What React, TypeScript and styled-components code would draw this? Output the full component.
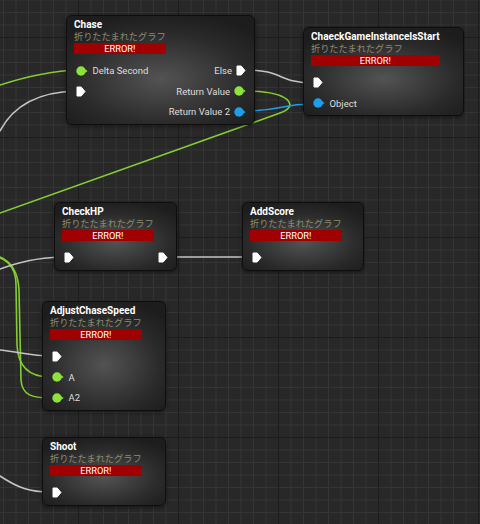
import React from "react";
import styled, { createGlobalStyle } from "styled-components";

const GREEN = "#8fe13c";
const GREEN_WIRE = "#84cc33";
const BLUE = "#1b9fea";
const WHITE_WIRE = "#c4c4c4";

const GlobalStyle = createGlobalStyle`
  html, body { margin: 0; padding: 0; background: #282828; overflow: hidden; }
  #root { width: 480px; height: 524px; }
`;

const Canvas = styled.div`
  position: relative;
  width: 480px;
  height: 524px;
  overflow: hidden;
  background-color: #282828;
  background-image:
    linear-gradient(to right, #1d1d1d 1px, transparent 1px),
    linear-gradient(to bottom, #1d1d1d 1px, transparent 1px),
    linear-gradient(to right, #353535 1px, transparent 1px),
    linear-gradient(to bottom, #353535 1px, transparent 1px);
  background-size: 100px 100px, 100px 100px, 12.5px 12.5px, 12.5px 12.5px;
  background-position: 78px 37px;
  font-family: Roboto, "Noto Sans", sans-serif;
`;

const WireLayer = styled.svg`
  position: absolute;
  left: 0;
  top: 0;
  width: 480px;
  height: 524px;
  pointer-events: none;
`;

const NodeBox = styled.div<{ $x: number; $y: number; $w: number }>`
  position: absolute;
  left: ${(p) => p.$x}px;
  top: ${(p) => p.$y}px;
  width: ${(p) => p.$w}px;
  box-sizing: border-box;
  border: 1px solid #0e0e0e;
  border-radius: 6px;
  padding: 3px 0 1.5px;
  background: radial-gradient(
    ellipse 68% 62% at 50% 58%,
    #535353 0%,
    #3e3e3e 35%,
    #2a2a2a 68%,
    #1d1d1d 100%
  );
  box-shadow: 0 1px 4px rgba(0, 0, 0, 0.55);
`;

const Header = styled.div`
  display: flex;
  flex-direction: column;
  align-items: stretch;
  width: fit-content;
  padding-left: 7px;
`;

const Title = styled.div`
  font-family: Roboto, "Noto Sans", sans-serif;
  font-weight: 700;
  font-size: 10px;
  line-height: 12px;
  color: #ffffff;
  white-space: nowrap;
`;

const Subtitle = styled.div`
  font-family: "Noto Sans CJK JP", "Noto Sans", sans-serif;
  font-size: 9.2px;
  line-height: 11px;
  margin-bottom: 1px;
  color: #8e8c71;
  white-space: nowrap;
`;

const ErrorBar = styled.div`
  height: 11px;
  background: #a00000;
  color: #ffffff;
  font-family: Roboto, "Noto Sans", sans-serif;
  font-size: 9.3px;
  line-height: 11px;
  text-align: center;
  white-space: nowrap;
`;

const Pins = styled.div`
  display: flex;
  justify-content: space-between;
  margin-top: 6.5px;
  padding: 0 8px 0 8.5px;
`;

const PinColumn = styled.div<{ $right?: boolean }>`
  display: flex;
  flex-direction: column;
  align-items: ${(p) => (p.$right ? "flex-end" : "flex-start")};
`;

const PinRow = styled.div<{ $right?: boolean }>`
  height: 20.5px;
  display: flex;
  align-items: center;
  gap: ${(p) => (p.$right ? "4px" : "5px")};
  font-family: Roboto, "Noto Sans", sans-serif;
  font-size: 9.5px;
  color: #dedede;
  white-space: nowrap;
`;

const ExecPin = () => (
  <svg width="10" height="11" viewBox="0 0 10 11">
    <path
      d="M1,1 H5.2 L9,5.5 L5.2,10 H1 Z"
      fill="#ffffff"
      stroke="#ffffff"
      strokeWidth="1"
      strokeLinejoin="round"
    />
  </svg>
);

const DataPin = ({ color }: { color: string }) => (
  <svg width="12" height="10" viewBox="0 0 12 10">
    <circle cx="5" cy="5" r="4.7" fill={color} />
    <path d="M9.2,3.2 L11.6,5 L9.2,6.8 Z" fill={color} />
  </svg>
);

type Pin = { kind: "exec" | "data"; color?: string; label?: string };

type NodeData = {
  title: string;
  x: number;
  y: number;
  w: number;
  left: Pin[];
  right: Pin[];
};

const nodes: NodeData[] = [
  {
    title: "Chase",
    x: 66,
    y: 15,
    w: 189,
    left: [
      { kind: "data", color: GREEN, label: "Delta Second" },
      { kind: "exec" },
    ],
    right: [
      { kind: "exec", label: "Else" },
      { kind: "data", color: GREEN, label: "Return Value" },
      { kind: "data", color: BLUE, label: "Return Value 2" },
    ],
  },
  {
    title: "ChaeckGameInstanceIsStart",
    x: 303,
    y: 27,
    w: 161,
    left: [{ kind: "exec" }, { kind: "data", color: BLUE, label: "Object" }],
    right: [],
  },
  {
    title: "CheckHP",
    x: 54,
    y: 202,
    w: 123,
    left: [{ kind: "exec" }],
    right: [{ kind: "exec" }],
  },
  {
    title: "AddScore",
    x: 242,
    y: 202,
    w: 122,
    left: [{ kind: "exec" }],
    right: [],
  },
  {
    title: "AdjustChaseSpeed",
    x: 42,
    y: 301,
    w: 124,
    left: [
      { kind: "exec" },
      { kind: "data", color: GREEN, label: "A" },
      { kind: "data", color: GREEN, label: "A2" },
    ],
    right: [],
  },
  {
    title: "Shoot",
    x: 42,
    y: 437,
    w: 124,
    left: [{ kind: "exec" }],
    right: [],
  },
];

const wires: { d: string; color: string }[] = [
  { d: "M0,85 C25,77 50,71 76,70", color: GREEN_WIRE },
  { d: "M245,91 C290,91 300,106 280,113 L0,213", color: GREEN_WIRE },
  { d: "M0,258 C10,262 16,270 16,285 L17,345 C18,368 30,377 50,377", color: GREEN_WIRE },
  { d: "M0,257 C12,262 18,272 19,290 L21,380 C22,395 32,398 50,398", color: GREEN_WIRE },
  { d: "M0,131 C12,108 35,92 76,91", color: WHITE_WIRE },
  { d: "M247,70 C282,70 280,83 313,83", color: WHITE_WIRE },
  { d: "M168,257 C200,257 220,257 251,257", color: WHITE_WIRE },
  { d: "M0,269 C20,262 35,258 62,257", color: WHITE_WIRE },
  { d: "M0,350 C20,352 32,356 50,356", color: WHITE_WIRE },
  { d: "M0,476 C18,488 30,492 50,492", color: WHITE_WIRE },
  { d: "M245,111 C280,111 280,104 313,104", color: BLUE },
];

const PinView = ({ pin, right }: { pin: Pin; right?: boolean }) => {
  const icon =
    pin.kind === "exec" ? <ExecPin /> : <DataPin color={pin.color || GREEN} />;
  return (
    <PinRow $right={right}>
      {right && pin.label && <span>{pin.label}</span>}
      {icon}
      {!right && pin.label && <span>{pin.label}</span>}
    </PinRow>
  );
};

const GraphNode = ({ node }: { node: NodeData }) => (
  <NodeBox $x={node.x} $y={node.y} $w={node.w}>
    <Header>
      <Title>{node.title}</Title>
      <Subtitle>折りたたまれたグラフ</Subtitle>
      <ErrorBar>ERROR!</ErrorBar>
    </Header>
    <Pins>
      <PinColumn>
        {node.left.map((p, i) => (
          <PinView key={i} pin={p} />
        ))}
      </PinColumn>
      <PinColumn $right>
        {node.right.map((p, i) => (
          <PinView key={i} pin={p} right />
        ))}
      </PinColumn>
    </Pins>
  </NodeBox>
);

export default function App() {
  return (
    <>
      <GlobalStyle />
      <Canvas>
        <WireLayer viewBox="0 0 480 524">
          {wires.map((w, i) => (
            <path
              key={i}
              d={w.d}
              fill="none"
              stroke={w.color}
              strokeWidth={1.6}
              strokeLinecap="round"
            />
          ))}
        </WireLayer>
        {nodes.map((n) => (
          <GraphNode key={n.title} node={n} />
        ))}
      </Canvas>
    </>
  );
}
